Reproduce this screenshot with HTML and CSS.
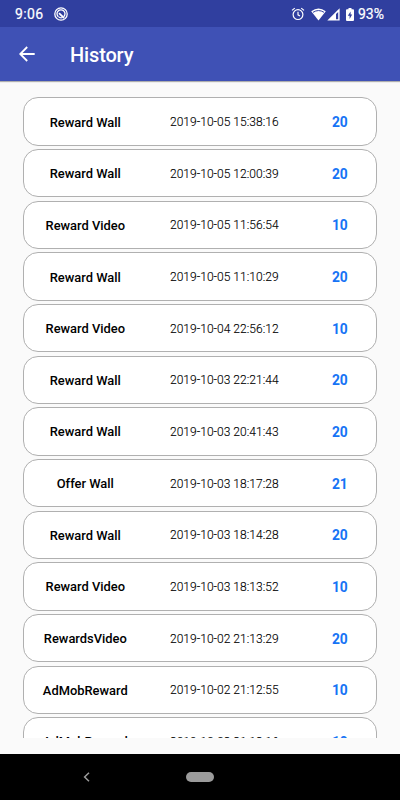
FILE: index.html
```html
<!DOCTYPE html>
<html lang="en">
<head>
<meta charset="utf-8">
<title>History</title>
<link rel="stylesheet" href="styles.css">
</head>
<body>
<div class="status">
  <span class="clock">9:06</span>
  <svg class="app-icon" width="14" height="14" viewBox="0 0 14 14" fill="none" stroke="#fff"><circle cx="7" cy="7" r="6.2" stroke-width="1.3"/><path d="M4.2 9.7A4 4 0 1 1 9.8 9.7" stroke-width="1.3"/><path d="M5 6.1l5 4.9" stroke-width="1.8"/><path d="M4.4 9.7q2 1.8 4 .9" stroke-width="1.1"/></svg>
  <svg class="alarm" width="14" height="14" viewBox="0 0 14 14" fill="none" stroke="#fff" stroke-width="1.2"><circle cx="7" cy="7.6" r="4.9"/><path d="M7 4.8v3l2 1.2M1 3.4L3.8 1.1M13 3.4L10.2 1.1"/></svg>
  <svg class="wifi" width="15" height="13" viewBox="0 0 15 13"><path d="M.2 3.2Q7.5-2.4 14.8 3.2L7.5 12.5z" fill="#fff"/><path d="M2 4.3Q7.5.8 13 4.3" fill="none" stroke="#303f9f" stroke-width="1"/></svg>
  <svg class="signal" width="13" height="13" viewBox="0 0 13 13"><path d="M12.6.3v12.3H.3z" fill="#fff"/><path d="M11.2 3.9v7.4H9V6z" fill="#303f9f"/></svg>
  <svg class="battery" width="8" height="13" viewBox="0 0 8 13"><path d="M2.5 0h3v1.3H7q1 0 1 1V12q0 1-1 1H1q-1 0-1-1V2.3q0-1 1-1h1.5z" fill="#fff"/><path d="M4.6 3.5L1.8 7.8h1.8v3.1l2.6-4.4H4.6z" fill="#303f9f"/></svg>
  <span class="percent">93%</span>
</div>
<header class="toolbar">
  <svg class="back" width="16" height="16" viewBox="0 0 16 16" fill="none" stroke="#fff" stroke-width="1.8"><path d="M15.7 8H1.4M8.2 1L1.2 8l7 7"/></svg>
  <h1>History</h1>
</header>
<main>
  <div class="list">
    <div class="card"><b>Reward Wall</b><time>2019-10-05 15:38:16</time><strong>20</strong></div>
    <div class="card"><b>Reward Wall</b><time>2019-10-05 12:00:39</time><strong>20</strong></div>
    <div class="card"><b>Reward Video</b><time>2019-10-05 11:56:54</time><strong>10</strong></div>
    <div class="card"><b>Reward Wall</b><time>2019-10-05 11:10:29</time><strong>20</strong></div>
    <div class="card"><b>Reward Video</b><time>2019-10-04 22:56:12</time><strong>10</strong></div>
    <div class="card"><b>Reward Wall</b><time>2019-10-03 22:21:44</time><strong>20</strong></div>
    <div class="card"><b>Reward Wall</b><time>2019-10-03 20:41:43</time><strong>20</strong></div>
    <div class="card"><b>Offer Wall</b><time>2019-10-03 18:17:28</time><strong>21</strong></div>
    <div class="card"><b>Reward Wall</b><time>2019-10-03 18:14:28</time><strong>20</strong></div>
    <div class="card"><b>Reward Video</b><time>2019-10-03 18:13:52</time><strong>10</strong></div>
    <div class="card"><b>RewardsVideo</b><time>2019-10-02 21:13:29</time><strong>20</strong></div>
    <div class="card"><b>AdMobReward</b><time>2019-10-02 21:12:55</time><strong>10</strong></div>
    <div class="card"><b>AdMobReward</b><time>2019-10-02 21:12:16</time><strong>10</strong></div>
  </div>
</main>
<nav>
  <svg class="nav-back" width="8" height="10" viewBox="0 0 8 10" fill="none" stroke="#9b9b9b" stroke-width="1.5"><path d="M6 .8L1.6 5 6 9.2"/></svg>
  <span class="home"></span>
</nav>
</body>
</html>
```

FILE: styles.css
```css
* { box-sizing: border-box; }
body {
  margin: 0;
  width: 400px;
  height: 800px;
  overflow: hidden;
  display: flex;
  flex-direction: column;
  background: #fafafa;
  font-family: Roboto, sans-serif;
}
.status {
  height: 27px;
  flex: none;
  display: flex;
  align-items: center;
  background: #303f9f;
  color: #fff;
  padding: 1px 16px 0 15px;
  font-size: 14px;
}
.clock { width: 39px; letter-spacing: .35px; -webkit-text-stroke: .2px #fff; }
.alarm { margin-left: auto; }
.wifi { margin-left: 6px; }
.signal { margin-left: 1px; }
.battery { margin-left: 6px; }
.percent { margin-left: 4px; width: 26px; white-space: nowrap; -webkit-text-stroke: .2px #fff; }
.toolbar {
  height: 54px;
  flex: none;
  display: flex;
  align-items: center;
  padding-left: 19px;
  background: #3f51b5;
  color: #fff;
  box-shadow: 0 1px 1px rgba(0, 0, 0, .3);
}
.toolbar h1 {
  margin: 2px 0 0 35px;
  font-size: 20px;
  line-height: 24px;
  font-weight: 500;
  letter-spacing: -.15px;
}
main { height: 673px; flex: none; padding: 16.4px 23.3px 15px; }
.list {
  height: 641px;
  overflow: hidden;
  display: flex;
  flex-direction: column;
  gap: 3.37px;
}
.card {
  height: 48.3px;
  flex: none;
  display: grid;
  grid-template-columns: 122px 156px 74px;
  align-items: center;
  text-align: center;
  padding-top: 1px;
  background: #fff;
  border: 1px solid #b0b0b0;
  border-radius: 15px;
}
.card b { font-size: 12.9px; font-weight: 500; color: #000; }
.card time { font-size: 12px; font-weight: 300; color: #000; letter-spacing: .03px; -webkit-text-stroke: .12px #000; }
.card strong { font-size: 13.8px; font-weight: 700; padding-left: 1px; color: #1673f5; }
nav {
  height: 46px;
  flex: none;
  display: flex;
  align-items: center;
  padding-left: 83px;
  background: #000;
}
.home {
  width: 28px;
  height: 10px;
  margin-left: 95px;
  border-radius: 5px;
  background: #9b9b9b;
}
```
